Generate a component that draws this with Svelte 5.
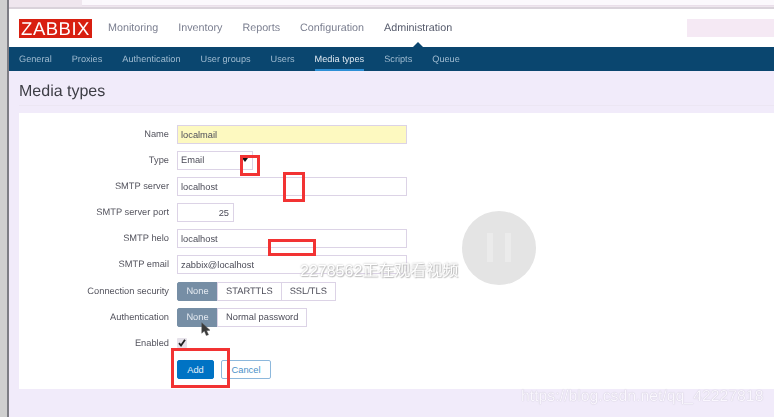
<script>
  const topNav = ['Monitoring', 'Inventory', 'Reports', 'Configuration', 'Administration'];
  const subNav = ['General', 'Proxies', 'Authentication', 'User groups', 'Users', 'Media types', 'Scripts', 'Queue'];
  const security = ['None', 'STARTTLS', 'SSL/TLS'];
  const auth = ['None', 'Normal password'];
</script>

<div class="screen">
  <div class="strip"></div>
  <div class="page">
    <div class="chrome"><div class="url"></div></div>

    <header class="top">
      <div class="logo">ZABBIX</div>
      <nav class="main-nav">
        {#each topNav as item}
          <span class:on={item === 'Administration'}>{item}</span>
        {/each}
      </nav>
      <div class="search"></div>
    </header>

    <nav class="sub-nav">
      {#each subNav as item}
        <span class:on={item === 'Media types'}>{item}</span>
      {/each}
    </nav>

    <main>
      <h1>Media types</h1>
      <form class="panel">
        <label for="f-name">Name</label>
        <input id="f-name" class="wide name" value="localmail" />

        <label for="f-type">Type</label>
        <div id="f-type" class="select">Email<i></i></div>

        <label for="f-server">SMTP server</label>
        <input id="f-server" class="wide" value="localhost" />

        <label for="f-port">SMTP server port</label>
        <input id="f-port" class="port" value="25" />

        <label for="f-helo">SMTP helo</label>
        <input id="f-helo" class="wide" value="localhost" />

        <label for="f-email">SMTP email</label>
        <input id="f-email" class="wide" value="zabbix@localhost" />

        <span class="lbl">Connection security</span>
        <div class="seg">
          {#each security as s, i}<span class:sel={i === 0}>{s}</span>{/each}
        </div>

        <span class="lbl">Authentication</span>
        <div class="seg">
          {#each auth as s, i}<span class:sel={i === 0}>{s}</span>{/each}
        </div>

        <span class="lbl">Enabled</span>
        <div class="check">
          <svg width="10" height="10" viewBox="0 0 10 10"><path d="M2 5.2 4 7.6 8 1.8" fill="none" stroke="#222" stroke-width="1.8"/></svg>
        </div>

        <span></span>
        <div class="actions">
          <button type="button" class="add">Add</button>
          <button type="button" class="cancel">Cancel</button>
        </div>
      </form>
    </main>
  </div>

  <!-- annotations and player overlay on top of the screenshot -->
  <div class="mark m1"></div>
  <div class="mark m2"></div>
  <div class="mark m3"></div>
  <div class="mark m4"></div>

  <svg class="cursor" width="10.5" height="15" viewBox="0 0 14 20">
    <path d="M1 1 1 15 4.5 12 7 18 10 17 7.5 11.5 12 11Z" fill="#3a3a3a" stroke="#555" stroke-width=".6"/>
  </svg>

  <div class="pause"><b></b><b></b></div>
  <div class="watch">2278562正在观看视频</div>
  <div class="source">https://blog.csdn.net/qq_42227818</div>
</div>

<style>
  :global(body) {
    margin: 0;
    background: #f1ebfa;
  }

  .screen {
    position: relative;
    display: flex;
    width: 774px;
    height: 417px;
    overflow: hidden;
    font-family: "Liberation Sans", Arial, sans-serif;
    color: #4c4c58;
    text-rendering: geometricPrecision;
    filter: blur(0.35px);
  }

  .strip {
    flex: none;
    width: 7px;
    background: #cfcfcf;
    border-right: 2px solid #7d7d84;
  }

  .page {
    flex: 1;
    min-width: 0;
    display: flex;
    flex-direction: column;
  }

  .chrome {
    height: 7px;
    padding-left: 73px;
    background: #efe6ee;
    border-bottom: 2px solid #d9d2da;
  }

  .url {
    height: 5px;
    background: #fbf8fc;
    border-bottom: 1px solid #eadfea;
  }

  .top {
    height: 38px;
    display: flex;
    align-items: center;
    padding-left: 10px;
    background: #fff;
  }

  .logo {
    width: 73px;
    height: 19px;
    background: #d81f10;
    color: #fff;
    font-size: 18.5px;
    line-height: 20px;
    text-align: center;
    letter-spacing: 0.5px;
  }

  .main-nav {
    display: flex;
    gap: 20px;
    margin-left: 16px;
    font-size: 10.75px;
    color: #7b7f90;
  }

  .main-nav .on {
    position: relative;
    color: #555a6b;
  }

  .main-nav .on::after {
    content: "";
    position: absolute;
    left: 28px;
    top: 20px;
    border: 6px solid transparent;
    border-top: 0;
    border-bottom-color: #0a466f;
  }

  .search {
    width: 87px;
    height: 18px;
    margin-left: auto;
    background: #f5e9f4;
  }

  .sub-nav {
    height: 24px;
    display: flex;
    gap: 20px;
    padding-left: 10px;
    background: #0a466f;
    font-size: 9.2px;
    line-height: 24px;
    color: #9fbbd0;
  }

  .sub-nav .on {
    color: #dfe9f2;
    box-shadow: inset 0 -2px 0 #2d8fd5;
  }

  main {
    flex: 1;
    padding-left: 10px;
  }

  h1 {
    margin: 0;
    height: 35px;
    padding-top: 11px;
    font-size: 16px;
    font-weight: normal;
    line-height: 20px;
    color: #3d3d45;
    box-sizing: border-box;
    border-bottom: 1px solid #ece6f3;
  }

  .panel {
    display: grid;
    grid-template-columns: 150px 1fr;
    grid-template-rows: repeat(5, 19px) 20px repeat(4, 19px);
    column-gap: 8px;
    row-gap: 7px;
    align-items: start;
    justify-items: start;
    height: 276px;
    box-sizing: border-box;
    margin-top: 7px;
    padding-top: 12px;
    background: #fff;
    font-size: 9.3px;
  }

  label, .lbl {
    justify-self: end;
    line-height: 19px;
    color: #55555f;
  }

  input, .select, .seg span {
    box-sizing: border-box;
    height: 19px;
    font: inherit;
    color: #4c4c58;
    border: 1px solid #dcd3e6;
  }

  input {
    padding: 0 3px;
    outline: none;
    background: #fff;
  }

  .wide { width: 230px; }
  .name { background: #fdf9c0; }
  .port { width: 57px; text-align: right; padding-right: 4px; }

  .select {
    position: relative;
    width: 76px;
    padding-left: 3px;
    line-height: 17px;
  }

  .select i {
    position: absolute;
    right: 4px;
    top: 6px;
    border: 3px solid transparent;
    border-bottom: 0;
    border-top: 4px solid #111;
  }

  .seg { display: flex; }

  .seg span {
    padding: 0 8px;
    line-height: 17px;
    margin-left: -1px;
    color: #4c4c58;
    background: #fff;
  }

  .seg span:first-child {
    margin-left: 0;
    border-radius: 2px 0 0 2px;
  }

  .seg span.sel {
    width: 41px;
    padding: 0;
    text-align: center;
    background: #768ea5;
    border-color: #768ea5;
    color: #e3e9f0;
  }

  .check {
    width: 10px;
    height: 10px;
    margin-top: 4px;
    background: #e6e2ea;
    border-radius: 1px;
    line-height: 0;
  }

  .actions {
    display: flex;
    gap: 7px;
  }

  button {
    box-sizing: border-box;
    height: 19px;
    padding: 0;
    font: inherit;
    border-radius: 2px;
  }

  .add {
    width: 37px;
    background: #0073c4;
    border: 1px solid #0073c4;
    color: #e6f0f9;
  }

  .cancel {
    width: 50px;
    background: #fff;
    border: 1px solid #8db8dc;
    color: #4a90c8;
  }

  .mark {
    position: absolute;
    box-sizing: border-box;
    border: 3px solid #f23333;
  }

  .m1 { left: 240px; top: 155px; width: 20px; height: 21px; }
  .m2 { left: 283px; top: 172px; width: 22px; height: 30px; }
  .m3 { left: 268px; top: 239px; width: 48px; height: 17px; }
  .m4 { left: 171px; top: 348px; width: 59px; height: 40px; }

  .cursor {
    position: absolute;
    left: 201px;
    top: 322px;
  }

  .pause {
    position: absolute;
    left: 462px;
    top: 211px;
    width: 74px;
    height: 74px;
    display: flex;
    justify-content: center;
    align-items: center;
    gap: 12px;
    border-radius: 50%;
    background: #e4e4e4;
  }

  .pause b {
    width: 6px;
    height: 29px;
    margin-top: -1px;
    background: #ebebeb;
  }

  .watch {
    position: absolute;
    left: 300px;
    top: 263px;
    font-family: "Liberation Sans", "Noto Sans CJK SC", sans-serif;
    font-size: 16px;
    line-height: 18px;
    color: #fff;
    text-shadow: 0 0 2px #b0b0b0, 1px 1px 1px #c4c4c4;
  }

  .source {
    position: absolute;
    left: 521px;
    top: 388px;
    font-size: 15.8px;
    line-height: 18px;
    color: #faf7fe;
    text-shadow: 0 0 1px #b5b0c2;
  }
</style>
